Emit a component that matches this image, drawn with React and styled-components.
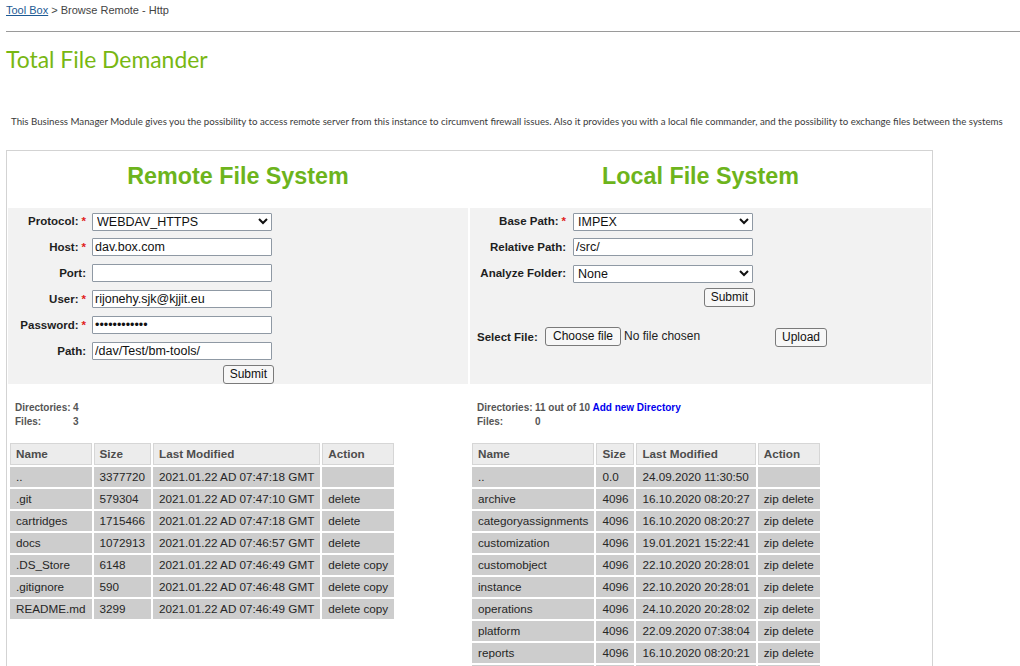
import React from 'react';
import styled, { createGlobalStyle } from 'styled-components';

const Global = createGlobalStyle`
  html, body { margin: 0; padding: 0; background: #fff; }
  body { font-family: "Liberation Sans", Arial, sans-serif; color: #333; }
  * { box-sizing: border-box; }
`;

const Page = styled.div`
  padding: 4px 0 0 6px;
`;

const Breadcrumb = styled.div`
  font-size: 11px;
  line-height: 13px;
  color: #444;
`;

const Crumb = styled.a`
  color: #1d5a94;
  text-decoration: underline;
`;

const Rule = styled.hr`
  border: 0;
  border-top: 1px solid #9a9a9a;
  height: 0;
  margin: 14px 0 0 0;
`;

const Title = styled.h1`
  font-family: Lato, "Open Sans", sans-serif;
  font-weight: 400;
  font-size: 22.9px;
  line-height: 30px;
  color: #78b712;
  margin: 12px 0 0 0;
`;

const Intro = styled.p`
  font-family: Lato, "Open Sans", sans-serif;
  font-size: 9.7px;
  line-height: 14px;
  color: #3a3a3a;
  margin: 40px 0 22px 0;
  padding-left: 5px;
  white-space: nowrap;
`;

const Panel = styled.div`
  width: 927px;
  border: 1px solid #d3d3d3;
  border-bottom: none;
  padding: 1px;
  display: grid;
  grid-template-columns: 460px 461px;
  column-gap: 2px;
`;

const Heading = styled.h2`
  margin: 0;
  height: 56px;
  padding-top: 12px;
  text-align: center;
  font-size: 23.3px;
  line-height: 24px;
  font-weight: 700;
  color: #6db41c;
`;

const FormArea = styled.div`
  background: #f2f2f2;
  height: 176px;
  padding-top: 4px;
  display: flex;
  flex-direction: column;
`;

const FormGrid = styled.div`
  display: grid;
  grid-template-columns: ${(p) => p.$label}px 182px;
  column-gap: ${(p) => p.$gap}px;
  row-gap: 8px;
  align-items: center;
`;

const Label = styled.label`
  text-align: right;
  font-size: 11.5px;
  font-weight: 700;
  color: #1e1e1e;
  white-space: nowrap;
`;

const Req = styled.span`
  color: #e0201b;
  margin-left: 3px;
`;

const TextInput = styled.input`
  width: 180px;
  height: 18px;
  border: 1px solid #8f99a4;
  border-radius: 1px;
  padding: 0 2px;
  font-family: "Liberation Sans", Arial, sans-serif;
  font-size: 12.5px;
  color: #111;
  background: #fff;
  outline: none;
`;

const SelectWrap = styled.div`
  position: relative;
  width: 180px;
  height: 18px;
`;

const Select = styled.select`
  appearance: none;
  -webkit-appearance: none;
  width: 180px;
  height: 18px;
  border: 1px solid #8f99a4;
  border-radius: 1px;
  padding: 0 0 0 4px;
  font-family: "Liberation Sans", Arial, sans-serif;
  font-size: 12.5px;
  line-height: 16px;
  color: #111;
  background: #fff;
  outline: none;
`;

const Chevron = styled.svg`
  position: absolute;
  right: 4px;
  top: 6px;
  pointer-events: none;
`;

const Button = styled.button`
  height: 19px;
  padding: 0 ${(p) => p.$pad || 6}px;
  border: 1px solid #7a7a7a;
  border-radius: 3px;
  background: #f7f7f7;
  font-family: "Liberation Sans", Arial, sans-serif;
  font-size: 12px;
  line-height: 17px;
  color: #111;
  margin-top: ${(p) => p.$top || 0}px;
`;

const SubmitCell = styled.div`
  grid-column: 2;
  display: flex;
  justify-content: flex-end;
  margin-top: ${(p) => p.$top}px;
`;

const FileRow = styled.div`
  display: flex;
  align-items: flex-start;
  margin-top: 19px;
  padding-left: 7px;
`;

const FileLabel = styled.span`
  width: 68px;
  font-size: 11.5px;
  font-weight: 700;
  color: #1e1e1e;
  line-height: 22px;
`;

const FilePick = styled.div`
  width: 230px;
  display: flex;
  align-items: center;
  gap: 3px;
`;

const NoFile = styled.span`
  font-size: 12px;
  color: #222;
`;

const Listing = styled.div`
  padding-top: 17px;
`;

const Info = styled.div`
  display: grid;
  grid-template-columns: 58px auto;
  padding-left: 7px;
  font-size: 10px;
  font-weight: 700;
  line-height: 14px;
  color: #555;
`;

const AddLink = styled.a`
  color: #0000ee;
  text-decoration: none;
`;

const Table = styled.table`
  margin-top: 12px;
  border-collapse: separate;
  border-spacing: 2px;
  font-size: 11.7px;
`;

const Th = styled.th`
  background: #ececec;
  border: 1px solid #d6d6d6;
  padding: 0 5px;
  height: 22px;
  line-height: 20px;
  text-align: left;
  font-weight: 700;
  color: #4d4d4d;
  white-space: nowrap;
`;

const Td = styled.td`
  background: ${(p) => (p.$dir ? '#cdcdcd' : '#ffffff')};
  border: 1px solid ${(p) => (p.$dir ? '#cdcdcd' : '#dcdcdc')};
  padding: 0 5px;
  height: 20px;
  line-height: 18px;
  color: #262626;
  white-space: nowrap;
`;

const ChevronIcon = () => (
  <Chevron width="10" height="7" viewBox="0 0 10 7">
    <polyline points="1,1 5,5 9,1" fill="none" stroke="#111" strokeWidth="2" />
  </Chevron>
);

const SelectBox = ({ value, options }) => (
  <SelectWrap>
    <Select defaultValue={value}>
      {options.map((o) => (
        <option key={o}>{o}</option>
      ))}
    </Select>
    <ChevronIcon />
  </SelectWrap>
);

const remoteRows = [
  { name: '..', size: '3377720', mod: '2021.01.22 AD 07:47:18 GMT', action: '', dir: true },
  { name: '.git', size: '579304', mod: '2021.01.22 AD 07:47:10 GMT', action: 'delete', dir: true },
  { name: 'cartridges', size: '1715466', mod: '2021.01.22 AD 07:47:18 GMT', action: 'delete', dir: true },
  { name: 'docs', size: '1072913', mod: '2021.01.22 AD 07:46:57 GMT', action: 'delete', dir: true },
  { name: '.DS_Store', size: '6148', mod: '2021.01.22 AD 07:46:49 GMT', action: 'delete copy' },
  { name: '.gitignore', size: '590', mod: '2021.01.22 AD 07:46:48 GMT', action: 'delete copy' },
  { name: 'README.md', size: '3299', mod: '2021.01.22 AD 07:46:49 GMT', action: 'delete copy' },
];

const localRows = [
  { name: '..', size: '0.0', mod: '24.09.2020 11:30:50', action: '' },
  { name: 'archive', size: '4096', mod: '16.10.2020 08:20:27', action: 'zip delete' },
  { name: 'categoryassignments', size: '4096', mod: '16.10.2020 08:20:27', action: 'zip delete' },
  { name: 'customization', size: '4096', mod: '19.01.2021 15:22:41', action: 'zip delete' },
  { name: 'customobject', size: '4096', mod: '22.10.2020 20:28:01', action: 'zip delete' },
  { name: 'instance', size: '4096', mod: '22.10.2020 20:28:01', action: 'zip delete' },
  { name: 'operations', size: '4096', mod: '24.10.2020 20:28:02', action: 'zip delete' },
  { name: 'platform', size: '4096', mod: '22.09.2020 07:38:04', action: 'zip delete' },
  { name: 'reports', size: '4096', mod: '16.10.2020 08:20:21', action: 'zip delete' },
  { name: 'sites', size: '4096', mod: '16.10.2020 08:20:21', action: 'zip delete' },
  { name: 'src', size: '4096', mod: '21.01.2021 09:12:40', action: 'zip delete' },
];

const FileTable = ({ rows }) => (
  <Table>
    <thead>
      <tr>
        <Th>Name</Th>
        <Th>Size</Th>
        <Th>Last Modified</Th>
        <Th>Action</Th>
      </tr>
    </thead>
    <tbody>
      {rows.map((r) => {
        const dir = r.dir !== undefined ? r.dir : true;
        return (
          <tr key={r.name}>
            <Td $dir={dir}>{r.name}</Td>
            <Td $dir={dir}>{r.size}</Td>
            <Td $dir={dir}>{r.mod}</Td>
            <Td $dir={dir}>{r.action}</Td>
          </tr>
        );
      })}
    </tbody>
  </Table>
);

export default function App() {
  return (
    <Page>
      <Global />
      <Breadcrumb>
        <Crumb href="#">Tool Box</Crumb> &gt; Browse Remote - Http
      </Breadcrumb>
      <Rule />
      <Title>Total File Demander</Title>
      <Intro>
        This Business Manager Module gives you the possibility to access remote server from this instance to circumvent firewall issues. Also it provides you with a local file commander, and the possibility to exchange files between the systems
      </Intro>
      <Panel>
        <Heading>Remote File System</Heading>
        <Heading>Local File System</Heading>

        <FormArea>
          <FormGrid $label={78} $gap={6}>
            <Label>Protocol:<Req>*</Req></Label>
            <SelectBox value="WEBDAV_HTTPS" options={['WEBDAV_HTTPS', 'WEBDAV_HTTP', 'SFTP', 'FTP']} />
            <Label>Host:<Req>*</Req></Label>
            <TextInput defaultValue="dav.box.com" readOnly />
            <Label>Port:</Label>
            <TextInput defaultValue="" readOnly />
            <Label>User:<Req>*</Req></Label>
            <TextInput defaultValue="rijonehy.sjk@kjjit.eu" readOnly />
            <Label>Password:<Req>*</Req></Label>
            <TextInput type="password" defaultValue="xxxxxxxxxxxx" readOnly />
            <Label>Path:</Label>
            <TextInput defaultValue="/dav/Test/bm-tools/" readOnly />
            <SubmitCell $top={-3}>
              <Button>Submit</Button>
            </SubmitCell>
          </FormGrid>
        </FormArea>

        <FormArea>
          <FormGrid $label={96} $gap={7}>
            <Label>Base Path:<Req>*</Req></Label>
            <SelectBox value="IMPEX" options={['IMPEX', 'TEMP', 'LOGS']} />
            <Label>Relative Path:</Label>
            <TextInput defaultValue="/src/" readOnly />
            <Label>Analyze Folder:</Label>
            <SelectBox value="None" options={['None', 'Size', 'Count']} />
            <SubmitCell $top={-2}>
              <Button>Submit</Button>
            </SubmitCell>
          </FormGrid>
          <FileRow>
            <FileLabel>Select File:</FileLabel>
            <FilePick>
              <Button $top={1} $pad={7}>Choose file</Button>
              <NoFile>No file chosen</NoFile>
            </FilePick>
            <Button $top={2}>Upload</Button>
          </FileRow>
        </FormArea>

        <Listing>
          <Info>
            <span>Directories:</span>
            <span>4</span>
            <span>Files:</span>
            <span>3</span>
          </Info>
          <FileTable rows={remoteRows} />
        </Listing>

        <Listing>
          <Info>
            <span>Directories:</span>
            <span>
              11 out of 10 <AddLink href="#">Add new Directory</AddLink>
            </span>
            <span>Files:</span>
            <span>0</span>
          </Info>
          <FileTable rows={localRows} />
        </Listing>
      </Panel>
    </Page>
  );
}
